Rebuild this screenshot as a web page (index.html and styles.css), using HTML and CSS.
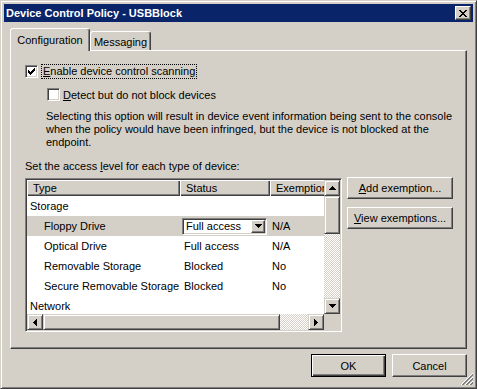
FILE: index.html
```html
<!DOCTYPE html>
<html lang="en">
<head>
  <meta charset="UTF-8" />
  <title>Device Control Policy - USBBlock</title>
  <link rel="stylesheet" href="styles.css">
</head>
<body>

<div class="window">
  <div class="titlebar">
    <span class="title">Device Control Policy - USBBlock</span>
    <button class="close-btn">
      <svg width="8" height="7" viewBox="0 0 8 7" shape-rendering="crispEdges"><path d="M0 0h2v1H0zM6 0h2v1H6zM1 1h2v1H1zM5 1h2v1H5zM2 2h4v1H2zM3 3h2v1H3zM2 4h4v1H2zM1 5h2v1H1zM5 5h2v1H5zM0 6h2v1H0zM6 6h2v1H6z"/></svg>
    </button>
  </div>

  <div class="client">
    <div class="tabs">
      <div class="tab active">Configuration</div>
      <div class="tab">Messaging</div>
    </div>

    <div class="panel">
      <div class="check-row">
        <span class="checkbox">
          <svg width="7" height="7" viewBox="0 0 7 7" shape-rendering="crispEdges"><path d="M6 0h1v1H6zM5 1h2v1H5zM0 2h1v1H0zM4 2h3v1H4zM0 3h2v1H0zM3 3h3v1H3zM0 4h5v1H0zM1 5h3v1H1zM2 6h1v1H2z"/></svg>
        </span>
        <span class="focus-text"><u>E</u>nable device control scanning</span>
      </div>
      <div class="check-row sub">
        <span class="checkbox"></span>
        <span><u>D</u>etect but do not block devices</span>
      </div>

      <p class="note">Selecting this option will result in device event information being sent to the console<br>when the policy would have been infringed, but the device is not blocked at the<br>endpoint.</p>

      <p class="caption">Set the access <u>l</u>evel for each type of device:</p>

      <div class="list-area">
        <div class="listview">
          <div class="lv-body">
            <div class="lv-header">
              <div class="hcell">Type</div>
              <div class="hcell">Status</div>
              <div class="hcell">Exemption</div>
            </div>
            <div class="lv-row">
              <div class="cell group">Storage</div>
              <div class="cell"></div>
              <div class="cell"></div>
            </div>
            <div class="lv-row selected">
              <div class="cell child">Floppy Drive</div>
              <div class="cell">
                <div class="combo">
                  <span class="combo-text">Full access</span>
                  <span class="combo-btn">
                    <svg width="7" height="4" viewBox="0 0 7 4" shape-rendering="crispEdges"><path d="M0 0h7v1H0zM1 1h5v1H1zM2 2h3v1H2zM3 3h1v1H3z"/></svg>
                  </span>
                </div>
              </div>
              <div class="cell exm">N/A</div>
            </div>
            <div class="lv-row">
              <div class="cell child">Optical Drive</div>
              <div class="cell status">Full access</div>
              <div class="cell exm">N/A</div>
            </div>
            <div class="lv-row">
              <div class="cell child">Removable Storage</div>
              <div class="cell status">Blocked</div>
              <div class="cell exm">No</div>
            </div>
            <div class="lv-row">
              <div class="cell child">Secure Removable Storage</div>
              <div class="cell status">Blocked</div>
              <div class="cell exm">No</div>
            </div>
            <div class="lv-row">
              <div class="cell group">Network</div>
              <div class="cell"></div>
              <div class="cell"></div>
            </div>
          </div>

          <div class="vscroll">
            <span class="sb-btn">
              <svg width="7" height="4" viewBox="0 0 7 4" shape-rendering="crispEdges"><path d="M3 0h1v1H3zM2 1h3v1H2zM1 2h5v1H1zM0 3h7v1H0z"/></svg>
            </span>
            <span class="sb-thumb v"></span>
            <span class="sb-track"></span>
            <span class="sb-btn">
              <svg width="7" height="4" viewBox="0 0 7 4" shape-rendering="crispEdges"><path d="M0 0h7v1H0zM1 1h5v1H1zM2 2h3v1H2zM3 3h1v1H3z"/></svg>
            </span>
          </div>

          <div class="hscroll">
            <span class="sb-btn">
              <svg width="4" height="7" viewBox="0 0 4 7" shape-rendering="crispEdges"><path d="M3 0h1v7H3zM2 1h1v5H2zM1 2h1v3H1zM0 3h1v1H0z"/></svg>
            </span>
            <span class="sb-thumb h"></span>
            <span class="sb-track"></span>
            <span class="sb-btn">
              <svg width="4" height="7" viewBox="0 0 4 7" shape-rendering="crispEdges"><path d="M0 0h1v7H0zM1 1h1v5H1zM2 2h1v3H2zM3 3h1v1H3z"/></svg>
            </span>
          </div>

          <div class="corner"></div>
        </div>

        <div class="side-buttons">
          <button class="btn wide"><u>A</u>dd exemption...</button>
          <button class="btn wide"><u>V</u>iew exemptions...</button>
        </div>
      </div>
    </div>

    <div class="footer">
      <button class="btn default">OK</button>
      <button class="btn">Cancel</button>
    </div>
  </div>

  <svg class="grip" width="12" height="12" viewBox="0 0 12 12">
    <g stroke-width="1">
      <path d="M12 0L0 12M12 4L4 12M12 8L8 12" stroke="#fff"/>
      <path d="M12 1L1 12M12 2L2 12M12 5L5 12M12 6L6 12M12 9L9 12M12 10L10 12" stroke="#808080"/>
    </g>
  </svg>
</div>

</body>
</html>
```

FILE: styles.css
```css
* {
  box-sizing: border-box;
}

body {
  margin: 0;
  background: #d4d0c8;
  font-family: "Liberation Sans", Arial, sans-serif;
  font-size: 11px;
  color: #000;
}

button {
  font: inherit;
  color: inherit;
  margin: 0;
  padding: 0;
}

.window {
  position: relative;
  width: 477px;
  height: 389px;
  border: 1px solid;
  border-color: #d4d0c8 #404040 #404040 #d4d0c8;
  box-shadow: inset 1px 1px #fff, inset -1px -1px #808080;
  padding: 3px;
  display: flex;
  flex-direction: column;
}

.titlebar {
  height: 18px;
  background: #0a246a;
  color: #fff;
  font-weight: bold;
  padding-left: 2px;
  display: flex;
  align-items: center;
  justify-content: space-between;
}

.close-btn {
  width: 16px;
  height: 14px;
  margin-right: 2px;
  background: #d4d0c8;
  border: 1px solid;
  border-color: #fff #404040 #404040 #fff;
  box-shadow: inset -1px -1px #808080;
  display: flex;
  align-items: center;
  justify-content: center;
}

.client {
  padding: 6px 6px 0 6px;
  display: flex;
  flex-direction: column;
}

/* tabs */
.tabs {
  display: flex;
  align-items: flex-end;
  height: 23px;
  margin-bottom: -1px;
  position: relative;
  z-index: 1;
}

.tab {
  width: 61px;
  height: 19px;
  margin-bottom: 1px;
  padding-top: 2px;
  background: #d4d0c8;
  border: 1px solid;
  border-bottom: none;
  border-color: #fff #404040 transparent #fff;
  border-radius: 3px 3px 0 0;
  box-shadow: inset -1px 0 #808080;
  display: flex;
  align-items: center;
  justify-content: center;
}

.tab.active {
  width: 80px;
  height: 23px;
  margin-bottom: 0;
  padding-top: 0;
}

.panel {
  height: 299px;
  border: 1px solid;
  border-color: #fff #404040 #404040 #fff;
  box-shadow: inset -1px -1px #808080;
  padding: 14px 0 0 14px;
  display: flex;
  flex-direction: column;
}

/* checkboxes */
.check-row {
  display: flex;
  align-items: center;
  gap: 3px;
  height: 13px;
}

.check-row.sub {
  margin-top: 10px;
  margin-left: 22px;
}

.checkbox {
  width: 13px;
  height: 13px;
  flex: none;
  background: #fff;
  border: 1px solid;
  border-color: #808080 #fff #fff #808080;
  box-shadow: inset 1px 1px #404040, inset -1px -1px #d4d0c8;
  display: flex;
  align-items: center;
  justify-content: center;
}

.focus-text {
  border: 1px dotted #000;
  padding: 0 1px;
  line-height: 13px;
}

.note {
  margin: 9px 0 0 21px;
  line-height: 13px;
  white-space: nowrap;
}

.caption {
  margin: 11px 0 0 0;
  line-height: 13px;
}

/* list view */
.list-area {
  display: flex;
  align-items: flex-start;
  margin-top: 5px;
}

.listview {
  width: 317px;
  height: 154px;
  border: 1px solid;
  border-color: #808080 #fff #fff #808080;
  box-shadow: inset 1px 1px #404040, inset -1px -1px #d4d0c8;
  padding: 1px;
  display: grid;
  grid-template-columns: 297px 16px;
  grid-template-rows: 134px 16px;
}

.lv-body {
  background: #fff;
  overflow: hidden;
  white-space: nowrap;
}

.lv-header,
.lv-row {
  display: grid;
  grid-template-columns: 153px 90px 90px;
}

.lv-header {
  height: 16px;
}

.hcell {
  background: #d4d0c8;
  box-shadow: inset 1px 1px #fff, inset -1px -1px #404040, inset -2px -2px #808080;
  padding-left: 6px;
  line-height: 16px;
}

.lv-row {
  height: 20px;
  align-items: center;
}

.lv-row.selected {
  background: #d4d0c8;
}

.cell.group { padding-left: 3px; }
.cell.child { padding-left: 17px; }
.cell.status { padding-left: 4px; }
.cell.exm { padding-left: 2px; }

.combo {
  width: 85px;
  height: 17px;
  margin-left: 2px;
  background: #fff;
  border: 1px solid;
  border-color: #808080 #fff #fff #808080;
  box-shadow: inset 1px 1px #404040, inset -1px -1px #d4d0c8;
  padding: 1px;
  display: flex;
  align-items: center;
}

.combo-text {
  flex: 1;
  padding-left: 2px;
}

.combo-btn {
  width: 14px;
  height: 13px;
  background: #d4d0c8;
  border: 1px solid;
  border-color: #fff #404040 #404040 #fff;
  box-shadow: inset -1px -1px #808080;
  display: flex;
  align-items: center;
  justify-content: center;
}

/* scrollbars */
.vscroll,
.hscroll {
  display: flex;
}

.vscroll {
  flex-direction: column;
}

.sb-btn,
.sb-thumb {
  flex: none;
  width: 16px;
  height: 16px;
  background: #d4d0c8;
  border: 1px solid;
  border-color: #d4d0c8 #404040 #404040 #d4d0c8;
  box-shadow: inset 1px 1px #fff, inset -1px -1px #808080;
  display: flex;
  align-items: center;
  justify-content: center;
}

.sb-thumb.v { height: 38px; }
.sb-thumb.h { width: 237px; }

.sb-track {
  flex: 1;
  background: repeating-conic-gradient(#d4d0c8 0 25%, #fff 0 50%) 0 0 / 2px 2px;
}

.corner {
  background: #d4d0c8;
}

/* buttons */
.btn {
  width: 75px;
  height: 23px;
  background: #d4d0c8;
  border: 1px solid;
  border-color: #fff #404040 #404040 #fff;
  box-shadow: inset -1px -1px #808080;
}

.btn.default {
  border-color: #000;
  box-shadow: inset 1px 1px #fff, inset -1px -1px #404040, inset -2px -2px #808080;
}

.side-buttons {
  display: flex;
  flex-direction: column;
  gap: 8px;
  margin: -1px 0 0 5px;
}

.btn.wide {
  width: 106px;
  height: 22px;
}

.footer {
  display: flex;
  justify-content: flex-end;
  gap: 6px;
  margin-top: 5px;
}

.grip {
  position: absolute;
  right: 3px;
  bottom: 3px;
}
```
